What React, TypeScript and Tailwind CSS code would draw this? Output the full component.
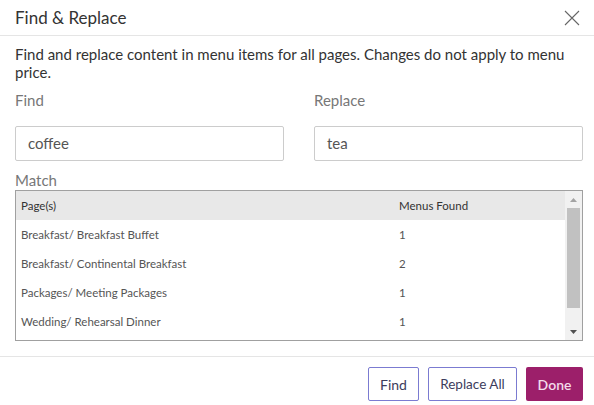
import React from "react";

const rows = [
  ["Breakfast/ Breakfast Buffet", "1"],
  ["Breakfast/ Continental Breakfast", "2"],
  ["Packages/ Meeting Packages", "1"],
  ["Wedding/ Rehearsal Dinner", "1"],
];

export default function App() {
  return (
    <div
      className="w-[594px] h-[405px] bg-white flex flex-col text-[#333] overflow-hidden"
      style={{ fontFamily: "Lato, 'Open Sans', sans-serif" }}
    >
      <div className="h-[36px] shrink-0 border-b border-[#e5e5e5] flex items-center justify-between pl-[15px] pr-[14px]">
        <div className="text-[17px] leading-none text-[#333]">Find &amp; Replace</div>
        <svg width="16" height="16" viewBox="0 0 16 16" className="text-[#666]">
          <path d="M1 1 L15 15 M15 1 L1 15" stroke="currentColor" strokeWidth="1.1" fill="none" />
        </svg>
      </div>
      <div className="pl-[15px] pr-[11px] flex flex-col">
        <p className="mt-[9px] text-[15px] leading-[18px] text-[#333]">
          Find and replace content in menu items for all pages. Changes do not apply to menu price.
        </p>
        <div className="grid grid-cols-2 gap-[30px] mt-[9px]">
          <div className="flex flex-col">
            <label className="text-[15px] leading-[20px] text-[#777]">Find</label>
            <div className="mt-[16px] h-[35px] border border-[#ccc] rounded-[2px] flex items-center px-[12px] text-[15px] text-[#555]">
              coffee
            </div>
          </div>
          <div className="flex flex-col">
            <label className="text-[15px] leading-[20px] text-[#777]">Replace</label>
            <div className="mt-[16px] h-[35px] border border-[#ccc] rounded-[2px] flex items-center px-[12px] text-[15px] text-[#555]">
              tea
            </div>
          </div>
        </div>
        <label className="mt-[9px] text-[15px] leading-[20px] text-[#777]">Match</label>
        <div className="h-[151px] border border-[#a0a0a0] flex">
          <div className="flex-1 flex flex-col">
            <div className="h-[29px] bg-[#e8e8e8] flex items-center text-[11.5px] text-[#333]">
              <div className="w-[383px] pl-[5px]">Page(s)</div>
              <div>Menus Found</div>
            </div>
            {rows.map(([p, n]) => (
              <div key={p} className="h-[29px] flex items-center text-[11.5px] text-[#555]">
                <div className="w-[383px] pl-[5px]">{p}</div>
                <div>{n}</div>
              </div>
            ))}
          </div>
          <div className="w-[17px] bg-[#f1f1f1] flex flex-col items-center">
            <div className="h-[17px] flex items-center justify-center">
              <svg width="7" height="4" viewBox="0 0 7 4">
                <path d="M0 4 L3.5 0 L7 4 Z" fill="#a3a3a3" />
              </svg>
            </div>
            <div className="w-[13px] h-[100px] bg-[#c1c1c1]" />
            <div className="flex-1" />
            <div className="h-[17px] flex items-center justify-center">
              <svg width="7" height="4" viewBox="0 0 7 4">
                <path d="M0 0 L7 0 L3.5 4 Z" fill="#505050" />
              </svg>
            </div>
          </div>
        </div>
      </div>
      <div className="mt-[15px] border-t border-[#e5e5e5] flex justify-end gap-[9px] px-[11px] pt-[10px]">
        <button className="h-[34px] w-[51px] border border-[#7b7bd1] rounded-[2px] text-[14px] text-[#3c3c5c] bg-white">
          Find
        </button>
        <button className="h-[34px] w-[89px] border border-[#7b7bd1] rounded-[2px] text-[13.5px] text-[#3c3c5c] bg-white whitespace-nowrap">
          Replace All
        </button>
        <button className="h-[34px] w-[57px] rounded-[2px] text-[14px] font-semibold text-[#f3dcea] bg-[#9c1f6a]">
          Done
        </button>
      </div>
    </div>
  );
}
